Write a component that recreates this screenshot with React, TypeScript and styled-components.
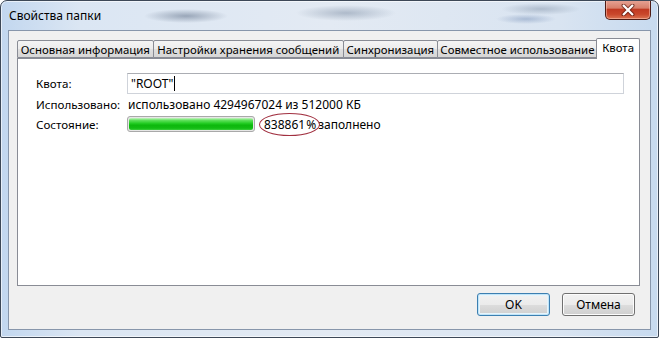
import React from "react";
import styled, { createGlobalStyle } from "styled-components";

const Global = createGlobalStyle`
  html, body { margin: 0; padding: 0; background: #ffffff; overflow: hidden; }
  * { box-sizing: border-box; }
  body { font-family: "Noto Sans", "Open Sans", sans-serif; font-size: 12px; color: #000; }
`;

const Window = styled.div`
  width: 659px;
  height: 338px;
  border: 1px solid #3d4857;
  border-radius: 7px 7px 2px 2px;
  display: flex;
  flex-direction: column;
  background:
    radial-gradient(ellipse 42px 7px at 185px 15px, rgba(96, 112, 136, 0.55), rgba(96, 112, 136, 0) 100%),
    radial-gradient(ellipse 50px 8px at 345px 12px, rgba(110, 128, 152, 0.45), rgba(110, 128, 152, 0) 100%),
    radial-gradient(ellipse 40px 6px at 540px 8px, rgba(110, 128, 152, 0.4), rgba(110, 128, 152, 0) 100%),
    radial-gradient(ellipse 30px 5px at 525px 18px, rgba(80, 110, 160, 0.35), rgba(80, 110, 160, 0) 100%),
    linear-gradient(to right, #c2d7ef 0%, #dbe6f3 12%, #e3eaf3 50%, #d9e4f1 85%, #c7daef 100%);
  box-shadow: inset 0 0 0 1px rgba(255, 255, 255, 0.6);
  overflow: hidden;
`;

const TitleBar = styled.div`
  height: 29px;
  display: flex;
  align-items: flex-start;
  justify-content: space-between;
  padding: 0 7px 0 7px;
`;

const Title = styled.span`
  font-family: "Noto Sans", sans-serif;
  font-size: 12px;
  line-height: 30px;
  color: #000;
  padding-left: 1px;
`;

const CloseButton = styled.div`
  width: 46px;
  height: 20px;
  margin-top: -1px;
  border: 1px solid #4e1c15;
  border-top: none;
  border-radius: 0 0 5px 5px;
  background: linear-gradient(to bottom, #e7a597 0%, #d8806b 42%, #c13a22 50%, #c9472b 75%, #dc7553 100%);
  box-shadow: inset 0 0 0 1px rgba(255, 205, 190, 0.5);
  display: flex;
  align-items: center;
  justify-content: center;
`;

const Client = styled.div`
  flex: 1;
  margin: 0 7px 7px 7px;
  border: 1px solid #8796ab;
  background: #f0f0f0;
  display: flex;
  flex-direction: column;
  padding: 7px 10px 0 8px;
`;

const TabStrip = styled.div`
  display: flex;
  align-items: flex-end;
  height: 20px;
  position: relative;
  z-index: 1;
`;

const Tab = styled.div<{ $w: number; $active?: boolean }>`
  width: ${(p) => p.$w}px;
  height: ${(p) => (p.$active ? 21 : 18)}px;
  margin-left: ${(p) => (p.$active ? -2 : -1)}px;
  margin-bottom: ${(p) => (p.$active ? -1 : 0)}px;
  border: 1px solid #898c95;
  border-bottom: ${(p) => (p.$active ? "none" : "1px solid #898c95")};
  border-radius: 2px 2px 0 0;
  background: ${(p) =>
    p.$active ? "#ffffff" : "linear-gradient(to bottom, #f4f4f4 0%, #ececec 50%, #e0e0e0 51%, #d6d6d6 100%)"};
  display: flex;
  align-items: ${(p) => (p.$active ? "flex-start" : "center")};
  justify-content: center;
  padding-top: ${(p) => (p.$active ? 1 : 0)}px;
  font-size: 11.4px;
  white-space: nowrap;
  overflow: hidden;
  color: #000;
  &:first-child { margin-left: 0; }
`;

const Panel = styled.div`
  height: 228px;
  border: 1px solid #898c95;
  background: #ffffff;
  padding: 14px 15px 0 18px;
`;

const Form = styled.div`
  display: grid;
  grid-template-columns: 91px 1fr;
  grid-template-rows: 21px 20px 20px;
  align-items: center;
`;

const Label = styled.span`
  font-size: 11.6px;
  color: #000;
  white-space: nowrap;
`;

const Input = styled.div`
  height: 21px;
  border: 1px solid #cfd3da;
  border-top-color: #abadb3;
  background: #fff;
  display: flex;
  align-items: center;
  padding-left: 3px;
  font-size: 12px;
`;

const Caret = styled.span`
  display: inline-block;
  width: 1px;
  height: 15px;
  background: #000;
  margin-left: 1px;
`;

const Value = styled.span`
  font-size: 12px;
  white-space: nowrap;
  padding-left: 1px;
`;

const StatusRow = styled.div`
  display: flex;
  align-items: center;
`;

const Progress = styled.div`
  width: 128px;
  height: 16px;
  border: 1px solid #a9a9a9;
  border-radius: 3px;
  background: #e6e6e6;
  padding: 1px;
`;

const ProgressFill = styled.div`
  height: 100%;
  border-radius: 2px;
  background: linear-gradient(to bottom, #c6f3c2 0%, #5ee05a 20%, #22cc22 45%, #0db80d 60%, #13bc13 85%, #3ccf3c 100%);
`;

const Circled = styled.span`
  display: inline-flex;
  align-items: center;
  height: 23px;
  margin-left: 4px;
  margin-right: -3px;
  padding: 0 3px 0 4px;
  border: 1px solid #a13040;
  border-radius: 50%;
  font-size: 12px;
  white-space: nowrap;
`;

const Percent = styled.span`
  margin-left: 1px;
`;

const Footer = styled.div`
  display: flex;
  justify-content: flex-end;
  gap: 12px;
  padding: 7px 5px 0 0;
`;

const Button = styled.div<{ $default?: boolean }>`
  width: 73px;
  height: 23px;
  border: 1px solid ${(p) => (p.$default ? "#3c7fb1" : "#707070")};
  border-radius: 3px;
  background: linear-gradient(to bottom, #f2f2f2 0%, #ebebeb 50%, #dddddd 51%, #cfcfcf 100%);
  box-shadow: ${(p) => (p.$default ? "inset 0 0 0 1px #c0e4f8, inset 0 0 0 2px #e7f4fb" : "inset 0 0 0 1px #fcfcfc")};
  display: flex;
  align-items: center;
  justify-content: center;
  font-size: 12px;
  color: #000;
`;

const tabs = [
  { label: "Основная информация", w: 137 },
  { label: "Настройки хранения сообщений", w: 192 },
  { label: "Синхронизация", w: 95 },
  { label: "Совместное использование", w: 162 },
];

const CloseGlyph = () => (
  <svg width="14" height="12" viewBox="0 0 14 12">
    <path d="M2.5 1.5 L11.5 10.5 M11.5 1.5 L2.5 10.5" stroke="#5a1a10" strokeWidth="4" strokeLinecap="round" opacity="0.7" />
    <path d="M2.8 1.8 L11.2 10.2 M11.2 1.8 L2.8 10.2" stroke="#ffffff" strokeWidth="2.2" strokeLinecap="square" />
  </svg>
);

export default function App() {
  return (
    <>
      <Global />
      <Window>
        <TitleBar>
          <Title>Свойства папки</Title>
          <CloseButton>
            <CloseGlyph />
          </CloseButton>
        </TitleBar>
        <Client>
          <TabStrip>
            {tabs.map((t) => (
              <Tab key={t.label} $w={t.w}>
                {t.label}
              </Tab>
            ))}
            <Tab $w={44} $active>
              Квота
            </Tab>
          </TabStrip>
          <Panel>
            <Form>
              <Label>Квота:</Label>
              <Input>
                "ROOT"<Caret />
              </Input>
              <Label>Использовано:</Label>
              <Value>использовано 4294967024 из 512000 КБ</Value>
              <Label>Состояние:</Label>
              <StatusRow>
                <Progress>
                  <ProgressFill />
                </Progress>
                <Circled>
                  838861<Percent>%</Percent>
                </Circled>
                <Value>заполнено</Value>
              </StatusRow>
            </Form>
          </Panel>
          <Footer>
            <Button $default>OK</Button>
            <Button>Отмена</Button>
          </Footer>
        </Client>
      </Window>
    </>
  );
}
